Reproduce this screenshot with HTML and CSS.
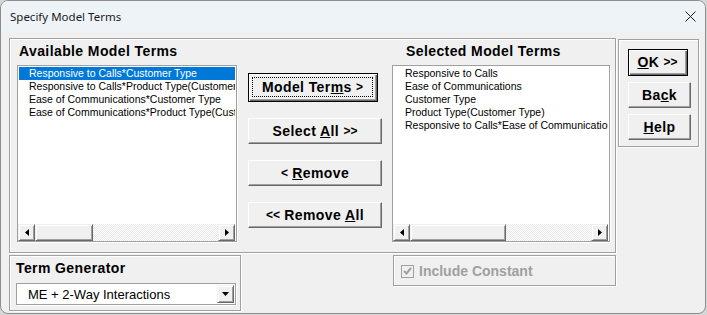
FILE: index.html
```html
<!DOCTYPE html>
<html lang="en">
<head>
  <meta charset="UTF-8" />
  <meta name="viewport" content="width=device-width, initial-scale=1.0"/>
  <title>Specify Model Terms</title>
  <link rel="stylesheet" href="styles.css">
</head>
<body>
  <div class="window">
    <div class="titlebar">
      <span class="title">Specify Model Terms</span>
      <svg class="close" width="11" height="11" viewBox="0 0 11 11">
        <path d="M0.5 0.5L10.5 10.5M10.5 0.5L0.5 10.5" stroke="#1a1a1a" stroke-width="1" fill="none"/>
      </svg>
    </div>

    <div class="client">
      <div class="top-row">
        <div class="group terms">
          <div class="col col-left">
            <h2 class="heading">Available Model Terms</h2>
            <div class="listbox list-left">
              <ul class="items">
                <li class="selected">Responsive to Calls*Customer Type</li>
                <li>Responsive to Calls*Product Type(Customer Type)</li>
                <li>Ease of Communications*Customer Type</li>
                <li>Ease of Communications*Product Type(Customer Type)</li>
              </ul>
              <div class="hscroll">
                <div class="sb-btn"><svg width="4" height="7" viewBox="0 0 4 7"><path d="M4 0V7L0 3.5Z"/></svg></div>
                <div class="sb-thumb"></div>
                <div class="sb-track"></div>
                <div class="sb-btn"><svg width="4" height="7" viewBox="0 0 4 7"><path d="M0 0V7L4 3.5Z"/></svg></div>
              </div>
            </div>
          </div>

          <div class="move-buttons">
            <button class="btn default wide"><span class="focus"><span class="label">Model Ter<u>m</u>s <span class="chev">&gt;</span></span></span></button>
            <button class="btn"><span class="label">Select <u>A</u>ll <span class="chev">&gt;&gt;</span></span></button>
            <button class="btn"><span class="label"><span class="chev">&lt;</span> <u>R</u>emove</span></button>
            <button class="btn"><span class="label"><span class="chev">&lt;&lt;</span> Remove <u>A</u>ll</span></button>
          </div>

          <div class="col col-right">
            <h2 class="heading">Selected Model Terms</h2>
            <div class="listbox list-right">
              <ul class="items">
                <li>Responsive to Calls</li>
                <li>Ease of Communications</li>
                <li>Customer Type</li>
                <li>Product Type(Customer Type)</li>
                <li>Responsive to Calls*Ease of Communications</li>
              </ul>
              <div class="hscroll">
                <div class="sb-btn"><svg width="4" height="7" viewBox="0 0 4 7"><path d="M4 0V7L0 3.5Z"/></svg></div>
                <div class="sb-thumb"></div>
                <div class="sb-track"></div>
                <div class="sb-btn"><svg width="4" height="7" viewBox="0 0 4 7"><path d="M0 0V7L4 3.5Z"/></svg></div>
              </div>
            </div>
          </div>
        </div>

        <div class="group actions">
          <button class="btn default small"><span class="focus"><span class="label"><u>O</u>K <span class="chev">&gt;&gt;</span></span></span></button>
          <button class="btn small"><span class="label">Ba<u>c</u>k</span></button>
          <button class="btn small"><span class="label"><u>H</u>elp</span></button>
        </div>
      </div>

      <div class="bottom-row">
        <div class="group generator">
          <h2 class="heading">Term Generator</h2>
          <div class="combo">
            <span class="combo-text">ME + 2-Way Interactions</span>
            <div class="combo-btn"><svg width="7" height="4" viewBox="0 0 7 4"><path d="M0 0H7L3.5 4Z"/></svg></div>
          </div>
        </div>

        <div class="group constant">
          <span class="checkbox">
            <svg width="11" height="11" viewBox="0 0 11 11"><path d="M2 5L4.5 7.5L9 2" stroke="#a0a0a0" stroke-width="2" fill="none"/></svg>
          </span>
          <span class="check-label">Include Constant</span>
        </div>
      </div>
    </div>
  </div>
</body>
</html>
```

FILE: styles.css
```css
* {
  margin: 0;
  padding: 0;
  box-sizing: border-box;
}

body {
  width: 707px;
  height: 315px;
  overflow: hidden;
  background-color: #d6d6d6;
  font-family: "Liberation Sans", Arial, sans-serif;
}

.window {
  width: 706px;
  height: 314px;
  background-color: #f0f0f0;
  border: 1px solid #8e8e8e;
  border-radius: 8px;
  overflow: hidden;
}

.titlebar {
  height: 31px;
  background-color: #eef3f8;
  display: flex;
  align-items: center;
  justify-content: space-between;
  padding: 0 9px 0 9px;
}

.title {
  font-family: "Noto Sans", sans-serif;
  font-size: 11.5px;
  color: #1b1b1b;
}

.client {
  padding: 6px 0 0 8px;
}

.top-row {
  display: flex;
  align-items: flex-start;
  gap: 2px;
}

/* etched group frame */
.group {
  border: 1px solid #a0a0a0;
  box-shadow: inset 1px 1px 0 #fff, 1px 1px 0 #fff;
}

.terms {
  width: 607px;
  height: 215px;
  display: flex;
  padding: 4px 5px 0 7px;
}

.col-left {
  width: 220px;
}

.col-right {
  width: 218px;
}

.heading {
  font-size: 14px;
  line-height: 16px;
  font-weight: bold;
  letter-spacing: 0.4px;
  color: #000;
}

.col-left .heading {
  padding-left: 2px;
}

.col-right .heading {
  padding-left: 14px;
}

.listbox {
  margin-top: 6px;
  height: 177px;
  background-color: #fff;
  border: 1px solid #a0a0a0;
  box-shadow: 1px 1px 0 #fff;
  display: flex;
  flex-direction: column;
}

.items {
  flex: 1;
  list-style: none;
  padding: 1px;
  overflow: hidden;
}

.items li {
  height: 13px;
  line-height: 13px;
  font-size: 10.5px;
  white-space: nowrap;
  overflow: hidden;
  color: #000;
}

.list-left .items li {
  padding-left: 10px;
}

.list-right .items li {
  padding-left: 11px;
}

.items li.selected {
  background-color: #0078d7;
  color: #fff;
}

.hscroll {
  height: 17px;
  display: flex;
  margin: 0 1px 0 0;
}

.sb-btn,
.sb-thumb {
  height: 17px;
  background-color: #f0f0f0;
  border: 1px solid;
  border-color: #f0f0f0 #696969 #696969 #f0f0f0;
  box-shadow: inset 1px 1px 0 #fff, inset -1px -1px 0 #a0a0a0;
}

.sb-btn {
  width: 17px;
  display: flex;
  align-items: center;
  justify-content: center;
}

.sb-btn svg {
  fill: #000;
}

.list-left .sb-thumb {
  width: 58px;
}

.list-right .sb-thumb {
  width: 96px;
}

.sb-track {
  flex: 1;
  background: repeating-conic-gradient(#fff 0 25%, #e8e8e8 0 50%) 0 0 / 2px 2px;
}

.move-buttons {
  width: 134px;
  margin: 30px 10px 0 11px;
  display: flex;
  flex-direction: column;
  gap: 16px;
}

.btn {
  width: 134px;
  height: 26px;
  display: flex;
  align-items: center;
  justify-content: center;
  background-color: #f0f0f0;
  border: 1px solid;
  border-color: #fff #696969 #696969 #fff;
  box-shadow: inset -1px -1px 0 #a0a0a0;
  font-family: "Liberation Sans", Arial, sans-serif;
  font-size: 14px;
  font-weight: bold;
  letter-spacing: 0.4px;
  color: #000;
}

.chev {
  font-size: 12px;
  letter-spacing: 0;
  vertical-align: 1px;
}

.btn.default {
  border: 1px solid #000;
  box-shadow: inset 1px 1px 0 #fff, inset -1px -1px 0 #696969, inset -2px -2px 0 #a0a0a0;
}

.btn.wide {
  width: 130px;
  height: 29px;
}

.focus {
  flex: 1;
  align-self: stretch;
  margin: 3px 4px 4px 3px;
  border: 1px dotted #000;
  display: flex;
  align-items: center;
  justify-content: center;
}

.actions {
  width: 81px;
  height: 108px;
  margin-top: 1px;
  padding: 9px 0 0 9px;
  display: flex;
  flex-direction: column;
  gap: 6px;
}

.btn.small {
  width: 63px;
  height: 26px;
}

.btn.small.default {
  width: 60px;
  height: 27px;
}

.btn.small.default .focus {
  border-color: transparent;
}

.bottom-row {
  display: flex;
  align-items: flex-start;
  margin-top: 2px;
}

.generator {
  width: 232px;
  height: 56px;
  padding: 4px 0 0 6px;
}

.combo {
  margin-top: 7px;
  width: 220px;
  height: 22px;
  background-color: #fff;
  border: 1px solid #a0a0a0;
  box-shadow: 1px 1px 0 #fff;
  display: flex;
  align-items: center;
  justify-content: space-between;
  padding: 1px;
}

.combo-text {
  padding-left: 10px;
  font-size: 13px;
  color: #000;
}

.combo-btn {
  width: 17px;
  height: 18px;
  background-color: #f0f0f0;
  border: 1px solid;
  border-color: #f0f0f0 #696969 #696969 #f0f0f0;
  box-shadow: inset 1px 1px 0 #fff, inset -1px -1px 0 #a0a0a0;
  display: flex;
  align-items: center;
  justify-content: center;
}

.constant {
  margin-left: 152px;
  width: 223px;
  height: 31px;
  display: flex;
  align-items: center;
  padding: 1px 0 0 7px;
  gap: 5px;
}

.checkbox {
  width: 13px;
  height: 13px;
  border: 1px solid #a0a0a0;
  background-color: #f0f0f0;
  display: flex;
  align-items: center;
  justify-content: center;
}

.check-label {
  font-size: 14px;
  font-weight: bold;
  color: #a0a0a0;
}
```
